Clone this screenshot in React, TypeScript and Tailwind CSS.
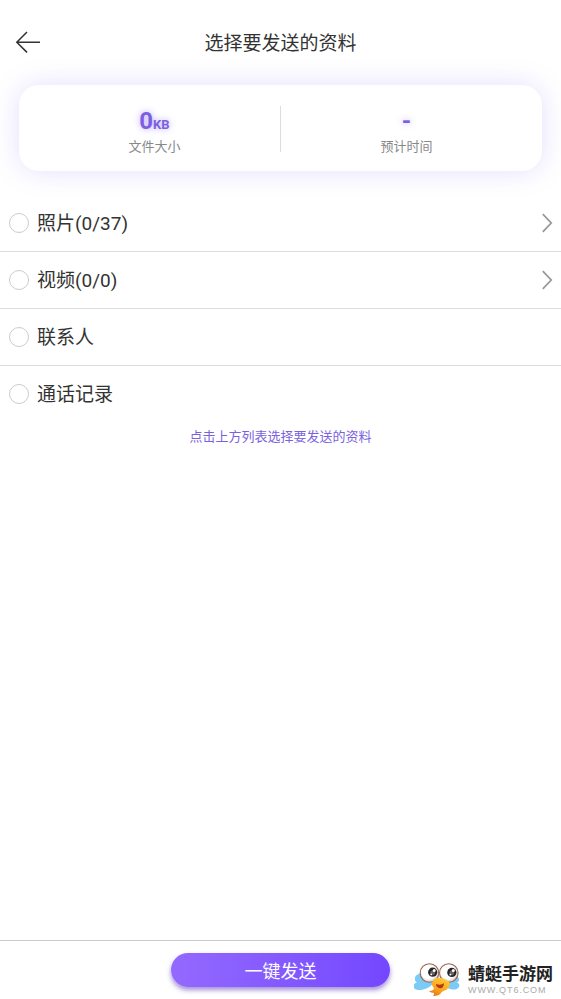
import { useState } from "react";

interface TransferItem {
  id: string;
  label: string;
  hasDetail: boolean;
}

const items: TransferItem[] = [
  { id: "photos", label: "照片(0/37)", hasDetail: true },
  { id: "videos", label: "视频(0/0)", hasDetail: true },
  { id: "contacts", label: "联系人", hasDetail: false },
  { id: "calls", label: "通话记录", hasDetail: false },
];

function BackIcon() {
  return (
    <svg className="w-7 h-6" viewBox="0 0 28 24" fill="none" stroke="#333" strokeWidth="1.5">
      <path d="M13 2 2.8 12.3 13 22.4M2.8 12.3H26" />
    </svg>
  );
}

function ChevronIcon() {
  return (
    <svg className="w-3 h-5" viewBox="0 0 12 20" fill="none" stroke="#999" strokeWidth="1.8">
      <path d="M1.8 1.2 10.2 10 1.8 18.8" />
    </svg>
  );
}

function DragonflyLogo() {
  return (
    <svg className="w-12 h-9" viewBox="0 0 48 36">
      <defs>
        <radialGradient id="eye" cx="45%" cy="42%" r="58%">
          <stop offset="65%" stopColor="#fff" />
          <stop offset="100%" stopColor="#cfc6c2" />
        </radialGradient>
        <linearGradient id="body" x1="0.7" y1="0" x2="0.2" y2="1">
          <stop offset="0%" stopColor="#ffcb36" />
          <stop offset="60%" stopColor="#f9a51d" />
          <stop offset="100%" stopColor="#e8711a" />
        </linearGradient>
      </defs>
      <path d="M9 11C4 11 0 14 1 18c.5 1.5 1 2 2 2.5-3 .5-4 3-3 5.500C3 30 14 28 20 21z" fill="#7accf6" />
      <path d="M38 15c4-1 8 0 7 3-.5 1.500-1 2-2 2.500 2 .5 3 2.500 2 4.500-2 3.500-10 4-15-2z" fill="#7accf6" />
      <circle cx="15.5" cy="11" r="9.3" fill="url(#eye)" stroke="#9a6453" strokeWidth="1.1" />
      <circle cx="34.8" cy="11" r="9.3" fill="url(#eye)" stroke="#9a6453" strokeWidth="1.1" />
      <path d="M19 19c2-3 4-4 7-3 3 0 7 2 9 4 2 2 0 6-3 8-2 1-4 1-5 3-1 2-4 3-8 3 1-1 1-2 1-3-2 0-4-1-5-2 3 0 5-1 5-3-2-2-3-5-1-7z" fill="url(#body)" />
      <path d="M22 22c3 1 6 1 8-1 0 4-2 6-5 5-2-1-3-2-3-4z" fill="#b9341a" />
      <circle cx="18.7" cy="10.2" r="4.6" fill="#262626" />
      <circle cx="37.8" cy="10.4" r="4.6" fill="#262626" />
      <circle cx="18.7" cy="10.8" r="2.4" fill="#666" />
      <circle cx="37.8" cy="11" r="2.4" fill="#666" />
      <circle cx="20.2" cy="8.4" r="1.5" fill="#fff" />
      <circle cx="39.3" cy="8.6" r="1.5" fill="#fff" />
      <circle cx="17.2" cy="12.4" r="0.9" fill="#fff" />
      <circle cx="36.3" cy="12.6" r="0.9" fill="#fff" />
    </svg>
  );
}

function SummaryCard() {
  return (
    <section className="mx-[19px] flex items-center rounded-[20px] bg-white px-[10px] pt-[18px] pb-4 shadow-[0_0_28px_rgba(124,92,246,0.2)]">
      <div className="flex flex-1 flex-col items-center">
        <p className="flex items-baseline text-2xl leading-9 font-bold text-[#7b61e0] [text-shadow:0_0_6px_rgba(124,77,255,0.5)]">
          0<span className="text-[13px] leading-4">KB</span>
        </p>
        <p className="text-[13px] leading-4 text-[#888]">文件大小</p>
      </div>
      <div className="h-[46px] w-px bg-[#ddd]"></div>
      <div className="flex flex-1 flex-col items-center">
        <p className="text-2xl leading-9 font-bold text-[#7b61e0] [text-shadow:0_0_6px_rgba(124,77,255,0.5)]">-</p>
        <p className="text-[13px] leading-4 text-[#888]">预计时间</p>
      </div>
    </section>
  );
}

export default function App() {
  const [selected, setSelected] = useState<string[]>([]);

  const toggle = (id: string) => {
    setSelected((prev) => (prev.includes(id) ? prev.filter((s) => s !== id) : [...prev, id]));
  };

  return (
    <div className="flex min-h-screen flex-col bg-white font-[Roboto,'Noto_Sans_CJK_SC',sans-serif] text-[#333]">
      <header className="grid grid-cols-[48px_1fr_48px] items-center pt-[26px] pb-[27px]">
        <button type="button" aria-label="返回" className="flex justify-center pl-2">
          <BackIcon />
        </button>
        <h1 className="pt-1 text-center text-[19px] leading-7">选择要发送的资料</h1>
      </header>

      <main className="flex-1">
        <SummaryCard />

        <ul className="mt-6">
          {items.map((item) => (
            <li key={item.id} className="flex h-[57px] items-center border-b border-[#ddd] pr-2 pl-[9px] last:border-transparent">
              <label className="flex flex-1 items-center gap-2 text-[19px] leading-7">
                <input
                  type="checkbox"
                  checked={selected.includes(item.id)}
                  onChange={() => toggle(item.id)}
                  className="size-5 appearance-none rounded-full border border-[#ccc] checked:border-[#7c4dff] checked:bg-[#7c4dff]"
                />
                <span className="pt-0.5">{item.label}</span>
              </label>
              {item.hasDetail && (
                <button type="button" aria-label="查看详情">
                  <ChevronIcon />
                </button>
              )}
            </li>
          ))}
        </ul>

        <p className="mt-1 text-center text-[13px] leading-5 text-[#7b61e0]">点击上方列表选择要发送的资料</p>
      </main>

      <footer className="relative flex justify-center border-t border-[#ccc] pt-3 pb-3">
        <button
          type="button"
          className="h-[34px] w-[39%] rounded-full bg-linear-to-r from-[#9469ff] to-[#7447ff] pt-1 text-lg leading-7 text-white shadow-[0_3px_5px_rgba(90,50,180,0.55)]"
        >
          一键发送
        </button>
        <div className="absolute right-2 bottom-px flex items-center gap-1.5">
          <DragonflyLogo />
          <div>
            <p className="text-[17px] leading-5 font-bold text-[#222]">蜻蜓手游网</p>
            <p className="font-['Liberation_Sans',sans-serif] text-[9px] leading-3 tracking-widest text-[#aaa]">WWW.QT6.COM</p>
          </div>
        </div>
      </footer>
    </div>
  );
}
